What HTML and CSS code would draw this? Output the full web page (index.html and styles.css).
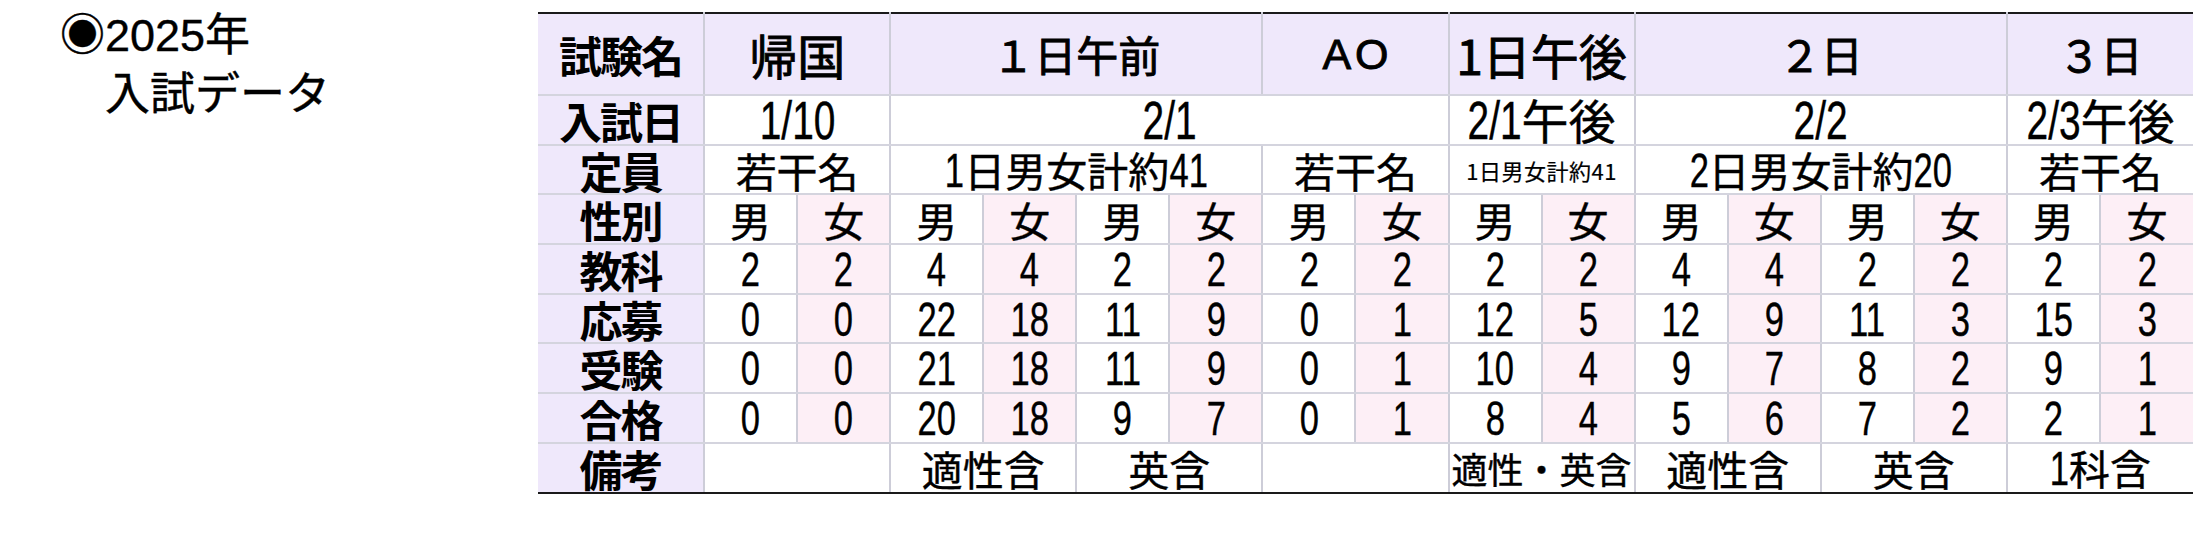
FILE: index.html
```html
<!DOCTYPE html>
<html lang="ja">
<head>
<meta charset="utf-8">
<link rel="stylesheet" href="styles.css">
</head>
<body>
<div class="page">
  <h1 class="title">◉2025年<br>　入試データ</h1>
  <table class="exam">
    <colgroup>
      <col class="c-lbl">
      <col><col><col><col><col><col><col><col>
      <col><col><col><col><col><col><col><col>
    </colgroup>
    <tr class="head">
      <th class="lbl">試験名</th>
      <th colspan="2" class="big">帰国</th>
      <th colspan="4">１日午前</th>
      <th colspan="2" class="ao">AO</th>
      <th colspan="2" class="big">1日午後</th>
      <th colspan="4">２日</th>
      <th colspan="2">３日</th>
    </tr>
    <tr class="date">
      <th class="lbl">入試日</th>
      <td colspan="2"><span class="n">1/10</span></td>
      <td colspan="6"><span class="n">2/1</span></td>
      <td colspan="2"><span class="n w3">2/1</span>午後</td>
      <td colspan="4"><span class="n">2/2</span></td>
      <td colspan="2"><span class="n w3">2/3</span>午後</td>
    </tr>
    <tr>
      <th class="lbl">定員</th>
      <td colspan="2">若干名</td>
      <td colspan="4"><span class="n w1">1</span>日男女計約<span class="n w2">41</span></td>
      <td colspan="2">若干名</td>
      <td colspan="2" class="tiny">1日男女計約41</td>
      <td colspan="4"><span class="n w1">2</span>日男女計約<span class="n w2">20</span></td>
      <td colspan="2">若干名</td>
    </tr>
    <tr>
      <th class="lbl">性別</th>
      <td>男</td><td class="f">女</td><td>男</td><td class="f">女</td>
      <td>男</td><td class="f">女</td><td>男</td><td class="f">女</td>
      <td>男</td><td class="f">女</td><td>男</td><td class="f">女</td>
      <td>男</td><td class="f">女</td><td>男</td><td class="f">女</td>
    </tr>
    <tr>
      <th class="lbl">教科</th>
      <td><span class="n">2</span></td><td class="f"><span class="n">2</span></td>
      <td><span class="n">4</span></td><td class="f"><span class="n">4</span></td>
      <td><span class="n">2</span></td><td class="f"><span class="n">2</span></td>
      <td><span class="n">2</span></td><td class="f"><span class="n">2</span></td>
      <td><span class="n">2</span></td><td class="f"><span class="n">2</span></td>
      <td><span class="n">4</span></td><td class="f"><span class="n">4</span></td>
      <td><span class="n">2</span></td><td class="f"><span class="n">2</span></td>
      <td><span class="n">2</span></td><td class="f"><span class="n">2</span></td>
    </tr>
    <tr>
      <th class="lbl">応募</th>
      <td><span class="n">0</span></td><td class="f"><span class="n">0</span></td>
      <td><span class="n">22</span></td><td class="f"><span class="n">18</span></td>
      <td><span class="n">11</span></td><td class="f"><span class="n">9</span></td>
      <td><span class="n">0</span></td><td class="f"><span class="n">1</span></td>
      <td><span class="n">12</span></td><td class="f"><span class="n">5</span></td>
      <td><span class="n">12</span></td><td class="f"><span class="n">9</span></td>
      <td><span class="n">11</span></td><td class="f"><span class="n">3</span></td>
      <td><span class="n">15</span></td><td class="f"><span class="n">3</span></td>
    </tr>
    <tr>
      <th class="lbl">受験</th>
      <td><span class="n">0</span></td><td class="f"><span class="n">0</span></td>
      <td><span class="n">21</span></td><td class="f"><span class="n">18</span></td>
      <td><span class="n">11</span></td><td class="f"><span class="n">9</span></td>
      <td><span class="n">0</span></td><td class="f"><span class="n">1</span></td>
      <td><span class="n">10</span></td><td class="f"><span class="n">4</span></td>
      <td><span class="n">9</span></td><td class="f"><span class="n">7</span></td>
      <td><span class="n">8</span></td><td class="f"><span class="n">2</span></td>
      <td><span class="n">9</span></td><td class="f"><span class="n">1</span></td>
    </tr>
    <tr>
      <th class="lbl">合格</th>
      <td><span class="n">0</span></td><td class="f"><span class="n">0</span></td>
      <td><span class="n">20</span></td><td class="f"><span class="n">18</span></td>
      <td><span class="n">9</span></td><td class="f"><span class="n">7</span></td>
      <td><span class="n">0</span></td><td class="f"><span class="n">1</span></td>
      <td><span class="n">8</span></td><td class="f"><span class="n">4</span></td>
      <td><span class="n">5</span></td><td class="f"><span class="n">6</span></td>
      <td><span class="n">7</span></td><td class="f"><span class="n">2</span></td>
      <td><span class="n">2</span></td><td class="f"><span class="n">1</span></td>
    </tr>
    <tr class="last">
      <th class="lbl">備考</th>
      <td colspan="2"></td>
      <td colspan="2">適性含</td>
      <td colspan="2">英含</td>
      <td colspan="2"></td>
      <td colspan="2" class="fit">適性・英含</td>
      <td colspan="2">適性含</td>
      <td colspan="2">英含</td>
      <td colspan="2"><span class="n w1">1</span>科含</td>
    </tr>
  </table>
</div>
</body>
</html>
```

FILE: styles.css
```css
html, body {
  margin: 0;
  padding: 0;
  background: #ffffff;
}

.page {
  display: flex;
  align-items: flex-start;
  padding: 12px 0 0 0;
}

.title {
  flex: 0 0 538px;
  box-sizing: border-box;
  padding-left: 60px;
  margin: -6px 0 0 0;
  font-family: "Liberation Sans", "Noto Sans CJK JP", sans-serif;
  font-weight: normal;
  font-size: 45px;
  line-height: 59px;
  color: #000;
  -webkit-text-stroke: 0.4px #000;
}

.exam {
  flex: 0 0 auto;
  border-collapse: collapse;
  table-layout: fixed;
  width: 1655px;
  font-family: "Noto Sans CJK JP", sans-serif;
  font-size: 41px;
  color: #000;
}

.exam col { width: 93px; }
.exam col.c-lbl { width: 166px; }

.exam th,
.exam td {
  border-left: 2px solid #cdcdd8;
  border-right: 2px solid #cdcdd8;
  border-top: 2px solid #d4d4de;
  border-bottom: 2px solid #d4d4de;
  padding: 0;
  text-align: center;
  vertical-align: middle;
  white-space: nowrap;
  line-height: 40px;
  height: 47.7px;
  font-weight: normal;
  -webkit-text-stroke: 0.4px #000;
}

.exam th:first-child { border-left: none; }
.exam th:last-child,
.exam td:last-child { border-right: none; }

.exam .head th {
  background: #efe8fb;
  height: 80px;
  font-size: 42px;
  border-top: 2px solid #1a1a1a;
  -webkit-text-stroke: 0.9px #000;
}

.exam .head th.big { font-size: 48px; }

.exam .head th.ao {
  font-family: "Liberation Sans", sans-serif;
  font-size: 43px;
  letter-spacing: 4px;
  padding-left: 4px;
}

.exam .last th,
.exam .last td { border-bottom: 2px solid #1a1a1a; }

.exam th.lbl {
  background: #efe8fb;
  font-weight: bold;
  font-size: 43px;
  letter-spacing: -2px;
  -webkit-text-stroke: 0;
}

.exam .head th.lbl {
  font-size: 43px;
  letter-spacing: -2px;
  padding-left: 0;
  -webkit-text-stroke: 0;
}

.exam td.f { background: #fdeff6; }

.n {
  display: inline-block;
  font-family: "Liberation Sans", sans-serif;
  font-size: 48px;
  line-height: 40px;
  transform: scaleX(0.72);
  margin: 0 calc(var(--w, 0em) * -0.14);
}

.n.w1 { --w: 0.556em; }
.n.w2 { --w: 1.112em; }
.n.w3 { --w: 1.389em; }

.exam .date td { font-size: 47px; }
.exam .date .n { font-size: 54px; }

.exam td.tiny {
  font-size: 22px;
  letter-spacing: 0.5px;
  -webkit-text-stroke: 0.2px #000;
}

.exam td.fit {
  font-size: 36px;
}
```
